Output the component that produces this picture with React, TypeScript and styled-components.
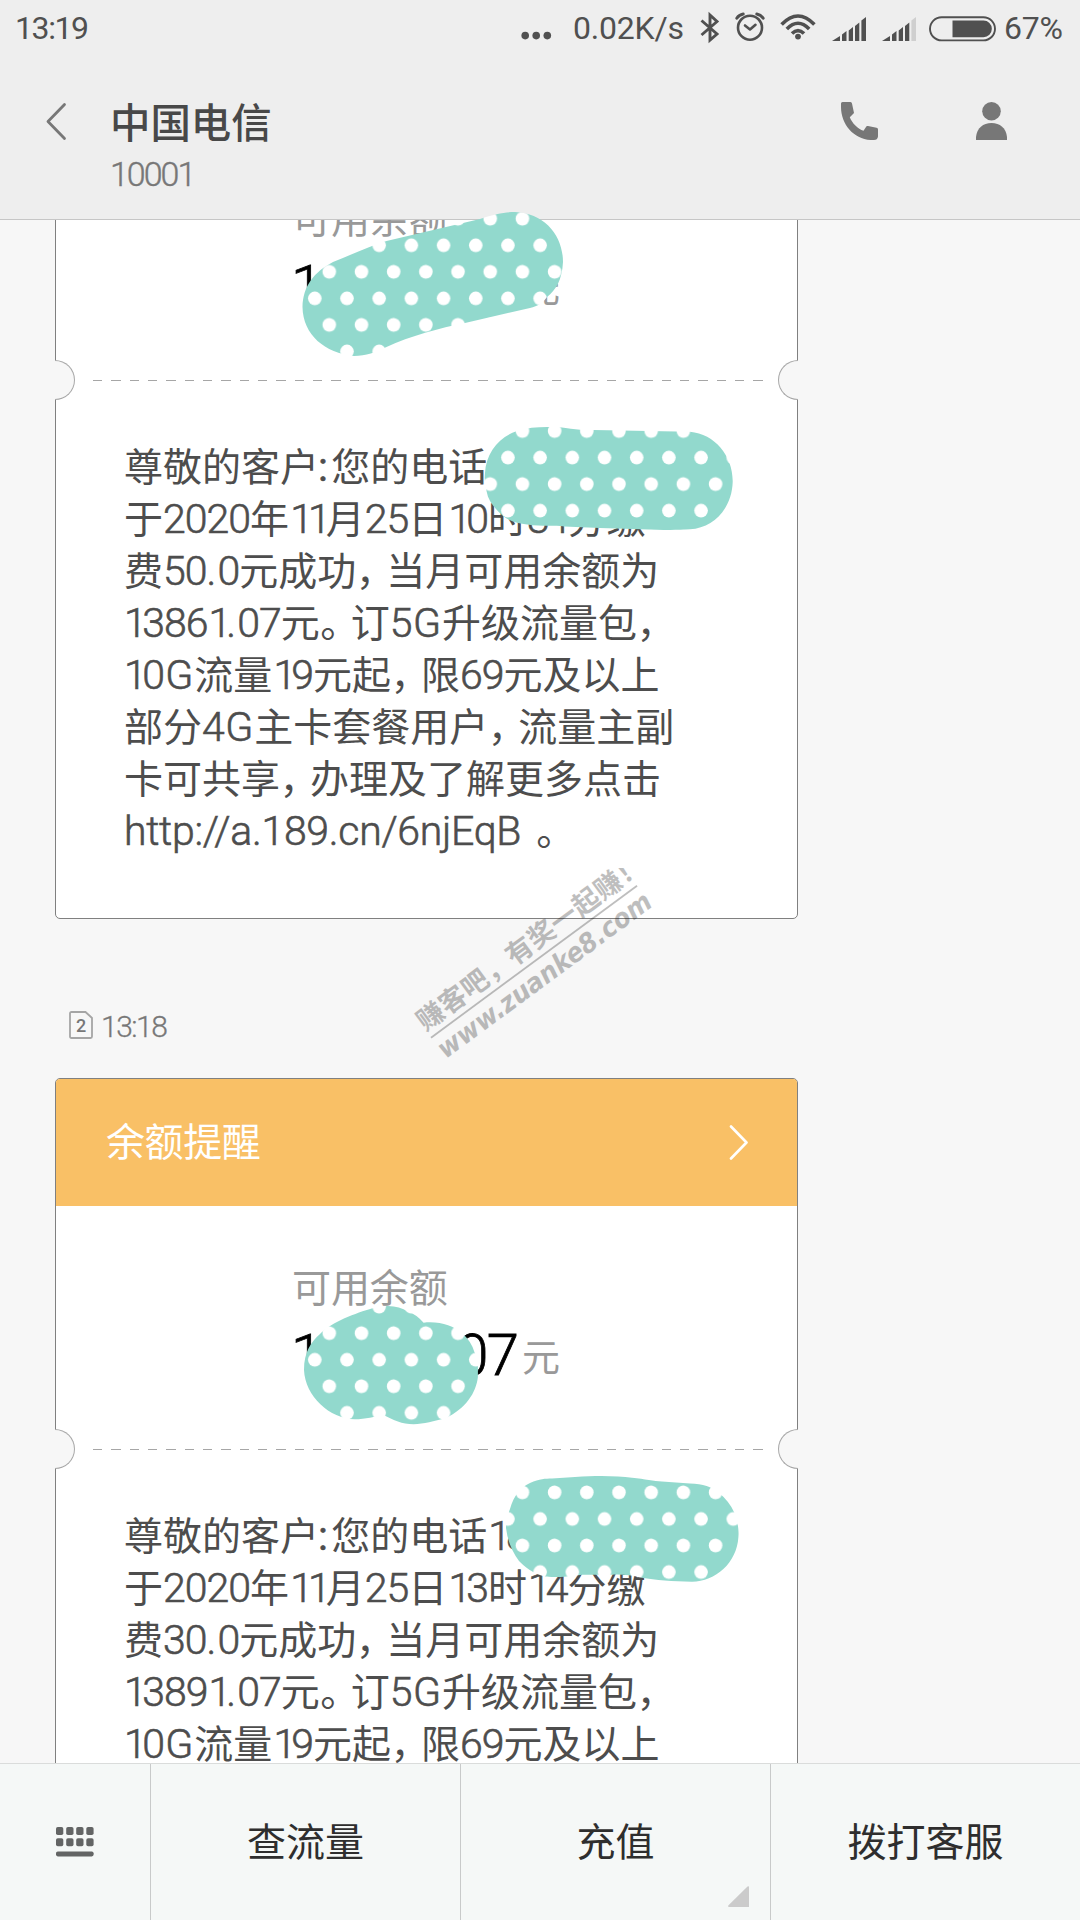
import React from "react";
import styled, { createGlobalStyle } from "styled-components";

const GlobalStyle = createGlobalStyle`
  * { box-sizing: border-box; }
  body { margin: 0; background: #f7f7f7; }
`;

const CJK = `"Noto Sans CJK SC", sans-serif`;
const LATIN = `Roboto, "Noto Sans CJK SC", sans-serif`;

const Screen = styled.div`
  position: relative;
  display: flex;
  flex-direction: column;
  width: 1080px;
  height: 1920px;
  overflow: hidden;
  background: #f7f7f7;
  font-family: ${CJK};
`;

/* ---------- top ---------- */

const Top = styled.header`
  flex: none;
  height: 220px;
  background: #eeeeee;
  border-bottom: 1px solid #c6c6c6;
`;

const StatusBar = styled.div`
  display: flex;
  align-items: center;
  height: 57px;
  padding: 0 17px 0 15px;
  color: #505050;
  svg { display: block; flex: none; }
`;

const StatusText = styled.span<{ $w: number; $ml?: number; $ls?: number }>`
  flex: none;
  width: ${(p) => p.$w}px;
  margin-left: ${(p) => p.$ml ?? 0}px;
  font: 400 32px/57px ${LATIN};
  letter-spacing: ${(p) => p.$ls ?? 0}px;
  white-space: nowrap;
`;

const StatusIcon = styled.svg<{ $ml: number }>`
  margin-left: ${(p) => p.$ml}px;
`;

const TitleBar = styled.div`
  display: flex;
  height: 162px;
  padding: 45px 73px 0 46px;
  svg { display: block; flex: none; }
`;

const Contact = styled.div`
  flex: 1;
  padding: 0 0 0 43px;
  margin-top: -9px;
`;

const ContactName = styled.div`
  font: 500 40.400px/56px ${CJK};
  color: #484848;
`;

const ContactNumber = styled.div`
  margin-top: 3px;
  font: 300 34px/44px ${LATIN};
  letter-spacing: -2px;
  color: #777;
  -webkit-text-stroke: 0.4px #777;
`;

const PersonIcon = styled.svg`
  margin-left: 98px;
`;

/* ---------- thread ---------- */

const Thread = styled.main`
  flex: 1;
  min-height: 0;
  display: flex;
  flex-direction: column;
  align-items: flex-start;
  padding-left: 55px;
  overflow: hidden;
`;

const Card = styled.article<{ $mt: number }>`
  flex: none;
  width: 743px;
  height: 910px;
  margin-top: ${(p) => p.$mt}px;
  background: #fff;
  border: 1px solid #808080;
  border-radius: 5px;
`;

const Banner = styled.div`
  display: flex;
  align-items: center;
  justify-content: space-between;
  height: 127px;
  padding: 0 48px 0 50px;
  border-radius: 4px 4px 0 0;
  background: #f9c066;
  color: #fff;
`;

const BannerTitle = styled.span`
  margin-top: -7px;
  font: 400 39px/56px ${CJK};
  letter-spacing: -0.4px;
`;

const Balance = styled.div`
  height: 223px;
  padding: 51px 0 0 236px;
`;

const BalanceLabel = styled.div`
  font: 400 39px/56px ${CJK};
  letter-spacing: -0.1px;
  color: #999;
`;

const BalanceRow = styled.div`
  display: flex;
  align-items: flex-start;
  height: 70px;
  margin-top: 4px;
`;

const Amount = styled.span`
  width: 231px;
  margin-left: -1px;
  padding-top: 3px;
  font: 300 58px/70px ${LATIN};
  letter-spacing: -1.6px;
  color: #000;
  -webkit-text-stroke: 0.8px #000;
  white-space: nowrap;
`;

const Unit = styled.span`
  padding-top: 3px;
  font: 400 38px/70px ${CJK};
  color: #999;
`;

const Tear = styled.div`
  display: flex;
  align-items: center;
  height: 40px;
  margin: 0 -1px;
`;

const Notch = styled.div<{ $side: "left" | "right" }>`
  flex: none;
  width: 20px;
  height: 40px;
  background: #f7f7f7;
  border: 1px solid #a8a8a8;
  ${(p) =>
    p.$side === "left"
      ? "border-left: 0; border-radius: 0 20px 20px 0;"
      : "border-right: 0; border-radius: 20px 0 0 20px;"}
`;

const Dashes = styled.div`
  flex: 1;
  height: 1px;
  margin: 1px 15px 0 18px;
  background: repeating-linear-gradient(90deg, #a6a6a6 0 9.4px, transparent 9.4px 18.34px);
`;

const Body = styled.div`
  padding: 38px 0 0 68px;
`;

const Line = styled.div`
  height: 52px;
  font: 400 39px/52px ${CJK};
  color: #4d4d4d;
  white-space: pre;
`;

const Half = styled.span<{ $w: number; $shift: number }>`
  display: inline-block;
  width: ${(p) => p.$w}px;
  text-indent: ${(p) => p.$shift}px;
  line-height: 50px;
  vertical-align: baseline;
`;

const Run = styled.span<{ $ls: number; $ml?: number; $weight?: number }>`
  margin-left: ${(p) => p.$ml ?? 0}px;
  font-family: ${LATIN};
  font-size: 41px;
  font-weight: ${(p) => p.$weight ?? 300};
  line-height: 0;
  letter-spacing: ${(p) => p.$ls}px;
  -webkit-text-stroke: 0.6px #4d4d4d;
`;

const Stamp = styled.div`
  display: flex;
  flex: none;
  align-items: center;
  gap: 8px;
  height: 158px;
  padding: 54px 0 0 14px;
  margin-top: 2px;
  font: 300 30px/40px ${LATIN};
  letter-spacing: -1.5px;
  color: #777;
  -webkit-text-stroke: 0.3px #777;
`;

const SimBadge = styled.svg`
  display: block;
  margin-top: -4px;
`;

/* ---------- bottom ---------- */

const Menu = styled.nav`
  flex: none;
  display: flex;
  height: 157px;
  background: #f5f8f7;
  border-top: 1px solid #dadcdb;
`;

const MenuItem = styled.div<{ $w: number; $last?: boolean }>`
  position: relative;
  display: flex;
  align-items: center;
  justify-content: center;
  flex: none;
  width: ${(p) => p.$w}px;
  border-right: ${(p) => (p.$last ? "0" : "1px solid #c8caca")};
  font: 400 39px/56px ${CJK};
  color: #2e2e2e;
`;

const MenuLabel = styled.span`
  margin-top: -6px;
`;

const Corner = styled.svg`
  position: absolute;
  right: 21px;
  bottom: 13px;
`;

/* ---------- overlays ---------- */

const Overlay = styled.svg`
  position: absolute;
  inset: 0;
  pointer-events: none;
`;

const SPACING: Record<string, number> = { "1": -4.6, G: 1, ":": 3.2, ".": 1.2 };

function RichLine({ text }: { text: string }) {
  if (text.startsWith("http")) {
    const [url, tail] = text.split(" ");
    return (
      <Line>
        <Run $ls={-0.3}>{url}</Run>
        <Half $w={44} $shift={15}>{tail}</Half>
      </Line>
    );
  }
  const parts = text.match(/1+|[02-9]+|[G:.]|[，。]|[^0-9G:.，。]+/g) ?? [];
  return (
    <Line>
      {parts.map((part, i) => {
        if (part === "，") return <Half key={i} $w={30} $shift={-0.5}>{part}</Half>;
        if (part === "。") return <Half key={i} $w={31} $shift={0.5}>{part}</Half>;
        if (part === ":") return <Run key={i} $ls={SPACING[part]} $ml={-1} $weight={400}>{part}</Run>;
        if (part === "G") return <Run key={i} $ls={SPACING[part]} $ml={1.4}>{part}</Run>;
        if (part[0] === "1" && i > 0) return <Run key={i} $ls={-5} $ml={1.2}>{part}</Run>;
        if (/^[0-9.]/.test(part)) return <Run key={i} $ls={SPACING[part[0]] ?? -1}>{part}</Run>;
        return <React.Fragment key={i}>{part}</React.Fragment>;
      })}
    </Line>
  );
}

const Chevron = () => (
  <svg width="20" height="36" viewBox="0 0 20 36" fill="none" stroke="#fff" strokeWidth="2.6" strokeLinecap="round" strokeLinejoin="round">
    <path d="M2 1.5L17.5 17.500L2 33.5" />
  </svg>
);

function Ticket({ mt, title, amount, lines }: { mt: number; title?: string; amount: string; lines: string[] }) {
  return (
    <Card $mt={mt}>
      <Banner>
        {title && <BannerTitle>{title}</BannerTitle>}
        {title && <Chevron />}
      </Banner>
      <Balance>
        <BalanceLabel>可用余额</BalanceLabel>
        <BalanceRow>
          <Amount>{amount}</Amount>
          <Unit>元</Unit>
        </BalanceRow>
      </Balance>
      <Tear>
        <Notch $side="left" />
        <Dashes />
        <Notch $side="right" />
      </Tear>
      <Body>
        {lines.map((l) => (
          <RichLine key={l} text={l} />
        ))}
      </Body>
    </Card>
  );
}

const Signal = ({ ml, level }: { ml: number; level: number }) => (
  <StatusIcon $ml={ml} width="34" height="24" viewBox="0 0 34 24">
    {["M0 24L8 19V24Z", "M10 17.5L14.5 14V24H10Z", "M16.7 13.5L21 10V24H16.7Z", "M23 9L27.3 5.5V24H23Z", "M29.4 3.5L34 0V24H29.4Z"].map((d, i) => (
      <path key={d} d={d} fill={i < level ? "#505050" : "#cfcfcf"} />
    ))}
  </StatusIcon>
);

export default function App() {
  return (
    <Screen>
      <GlobalStyle />
      <Top>
        <StatusBar>
          <StatusText $w={75} $ls={-1.4}>13:19</StatusText>
          <StatusIcon $ml={431} width="31" height="57" viewBox="0 0 31 57" fill="#505050">
            <circle cx="4.2" cy="35.6" r="3.8" />
            <circle cx="15.2" cy="35.6" r="3.8" />
            <circle cx="26.3" cy="35.6" r="3.8" />
          </StatusIcon>
          <StatusText $w={110} $ml={21} $ls={-0.2}>0.02K/s</StatusText>
          <StatusIcon $ml={17} width="20" height="57" viewBox="0 0 20 57" fill="none" stroke="#505050" strokeWidth="2.9">
            <path d="M1.5 20.5L17 34L10 40V15L17 21.5L1.5 35" />
          </StatusIcon>
          <StatusIcon $ml={15} width="30" height="57" viewBox="0 0 30 57" fill="none" stroke="#505050" strokeWidth="2.6" strokeLinecap="round">
            <circle cx="15" cy="27.7" r="12" />
            <path d="M10 25.5L15 29.5L20.5 24.8" strokeLinejoin="round" />
            <path d="M1.8 18.2Q4 14.8 8.2 14M28.2 18.2Q26 14.8 21.8 14" strokeWidth="3" />
          </StatusIcon>
          <StatusIcon $ml={15} width="36" height="57" viewBox="0 0 36 57" fill="none" stroke="#505050" strokeWidth="3.6">
            <path d="M1.6 24.5Q18 7.500 34.400 24.5" />
            <path d="M6.800 29Q18 17.500 29.200 29" />
            <path d="M12 33.500Q18 27.500 24 33.500" />
            <circle cx="18" cy="36.600" r="2.900" fill="#505050" stroke="none" />
          </StatusIcon>
          <Signal ml={16} level={5} />
          <Signal ml={16} level={4} />
          <StatusIcon $ml={13} width="67" height="26" viewBox="0 0 67 26">
            <rect x="1" y="1.200" width="65" height="23.200" rx="11.600" fill="none" stroke="#505050" strokeWidth="1.900" />
            <path d="M23.500 4.500H54.500A8.300 8.300 0 0 1 54.500 21.200H23.500Z" fill="#505050" />
          </StatusIcon>
          <StatusText $w={62} $ml={8} $ls={-0.2}>67%</StatusText>
        </StatusBar>
        <TitleBar>
          <svg width="21" height="40" viewBox="0 0 21 40" fill="none" stroke="#777" strokeWidth="2.8" strokeLinecap="round" strokeLinejoin="round">
            <path d="M18.500 2.500L2 19.500L18.500 36.500" />
          </svg>
          <Contact>
            <ContactName>中国电信</ContactName>
            <ContactNumber>10001</ContactNumber>
          </Contact>
          <svg width="37" height="38" viewBox="0 0 37 38" fill="#777">
            <path d="M1.500 0H9.500Q10.800 0 11 1.500L13 11L8.800 15.200C11 21 17 27 22.500 28.800L25.500 24.200Q26 23.800 27 24L35.500 25.800Q37 26 37 27.500V34.500Q36.500 38 33 38C14 39 0 23 0 5V1.500Q0 0 1.500 0Z" />
          </svg>
          <PersonIcon width="31" height="38" viewBox="0 0 31 38" fill="#777">
            <ellipse cx="15.500" cy="9.200" rx="9.300" ry="9.200" />
            <path d="M0 38V35C1 26 7 21 15.500 21C24 21 30 26 31 35V38Z" />
          </PersonIcon>
        </TitleBar>
      </Top>

      <Thread>
        <Ticket
          mt={-211}
          amount="13861.07"
          lines={[
            "尊敬的客户:您的电话",
            "于2020年11月25日10时31分缴",
            "费50.0元成功，当月可用余额为",
            "13861.07元。订5G升级流量包，",
            "10G流量19元起，限69元及以上",
            "部分4G主卡套餐用户，流量主副",
            "卡可共享，办理及了解更多点击",
            "http://a.189.cn/6njEqB 。",
          ]}
        />
        <Stamp>
          <SimBadge width="24" height="28" viewBox="0 0 24 28">
            <path d="M2.500 1H16.500L23 7V25.500Q23 27 21.500 27H2.500Q1 27 1 25.500V2.500Q1 1 2.500 1Z" fill="none" stroke="#a5a5a5" strokeWidth="1.800" />
            <text x="12" y="20.800" textAnchor="middle" fontFamily="Roboto, sans-serif" fontSize="18" fontWeight="500" letterSpacing="0" fill="#777">2</text>
          </SimBadge>
          <span>13:18</span>
        </Stamp>
        <Ticket
          mt={-1}
          title="余额提醒"
          amount="13891.07"
          lines={[
            "尊敬的客户:您的电话18",
            "于2020年11月25日13时14分缴",
            "费30.0元成功，当月可用余额为",
            "13891.07元。订5G升级流量包，",
            "10G流量19元起，限69元及以上",
          ]}
        />
      </Thread>

      <Menu>
        <MenuItem $w={151}>
          <svg width="38" height="30" viewBox="0 0 38 30" fill="#636565">
            {[0, 10.2, 20.2, 30.300].map((x) => (
              <React.Fragment key={x}>
                <rect x={x} y="0" width="7.300" height="8" rx="1.800" />
                <rect x={x} y="11.200" width="7.300" height="8" rx="1.800" />
              </React.Fragment>
            ))}
            <rect x="0" y="24.400" width="37.600" height="5" rx="1.800" />
          </svg>
        </MenuItem>
        <MenuItem $w={310}>
          <MenuLabel>查流量</MenuLabel>
        </MenuItem>
        <MenuItem $w={310}>
          <MenuLabel>充值</MenuLabel>
          <Corner width="21" height="21" viewBox="0 0 21 21" fill="#cbcbcb">
            <path d="M19.500 0.500Q21 -0.300 21 1V21H1Q-0.500 20.500 0.500 19.300Z" />
          </Corner>
        </MenuItem>
        <MenuItem $w={309} $last>
          <MenuLabel>拨打客服</MenuLabel>
        </MenuItem>
      </Menu>

      <Overlay width="1080" height="1920" viewBox="0 0 1080 1920">
        <defs>
          <pattern id="dots" patternUnits="userSpaceOnUse" x="298.300" y="232" width="32.190" height="53.070">
            <rect width="33" height="54" fill="#92d9cd" />
            <circle cx="16.500" cy="13.300" r="6.800" fill="#fff" />
            <circle cx="-1.190" cy="39.800" r="6.800" fill="#fff" />
            <circle cx="31" cy="39.800" r="6.800" fill="#fff" />
          </pattern>
          <clipPath id="markClip">
            <rect x="400" y="868" width="270" height="200" />
          </clipPath>
        </defs>
        <g fill="url(#dots)">
          <path d="M302.500 307C303 286 314 272 333 262C353 254 370 246 386.500 241L480 219C495 214 505 212 515 212C545 213 563 236 563 262C562 280 556 290 547 297C543 303 538 306 530 308L465 323C440 328 410 336 386.500 347C376 352 366 356 354 356C325 353 303 335 302.500 307Z" />
          <path d="M485 473C486 453 499 437 517 431C530 426.500 546 426.500 560 427.300C568 428 574 429.500 580 429.700L690 431.700C715 434 733 456 732.700 481.700C732 508 714 528 690 529.300C680 530 668 530 656.700 529.700L600 528C585 527.500 565 526.500 556.700 525.700C540 526 515 526 503 516C494 508 488 500 486.700 491.700Q484 482 485 473Z" />
          <path d="M304 1370C304 1352 311 1342 320 1334C332 1322 356 1313 372.500 1308.300C388 1304 399 1306 408 1311.700Q416 1314 423.600 1322.700C440 1321 453 1326 462 1333Q471 1341 474.300 1351.700L477.900 1360V1377C476 1393 466 1408 445.700 1418.300C434 1421 424 1424 413.600 1424.300C402 1424 393 1420 385 1415.700C374 1416 366 1419.300 354.600 1419.300C330 1419 305 1396 304 1370Z" />
          <path d="M506 1528Q506 1519 510 1509C514 1495 521 1487 530 1483C540 1478.500 545 1478.700 552 1478.500L575 1477C600 1475 618 1476 632 1477.700C645 1479 654 1481 662 1481.500L690 1483.500C703 1484 712 1487 718 1492Q729 1501 734 1512C738 1522 739 1531 738.400 1537C737 1563 715 1582 691.600 1581.700C673 1581.500 655 1580 642 1577.700C630 1575 620 1574 612 1574.700H582C567 1577 552 1577.500 545 1576.500C533 1574 524 1566 519 1561Q508 1546 506 1528Z" />
        </g>
        <g clipPath="url(#markClip)" fill="#000" opacity="0.250">
          <g transform="translate(431 1037.700) rotate(-36.400)">
            <rect x="0" y="-0.900" width="256" height="1.800" />
            <text x="-1" y="-8" fontFamily="Noto Sans CJK SC, sans-serif" fontSize="27" fontWeight="700" textLength="275">赚客吧，有奖一起赚！</text>
            <text x="-1" y="26" fontFamily="DejaVu Sans, sans-serif" fontSize="27" fontWeight="700" fontStyle="italic" textLength="259" lengthAdjust="spacingAndGlyphs">www.zuanke8.com</text>
          </g>
        </g>
      </Overlay>
    </Screen>
  );
}
